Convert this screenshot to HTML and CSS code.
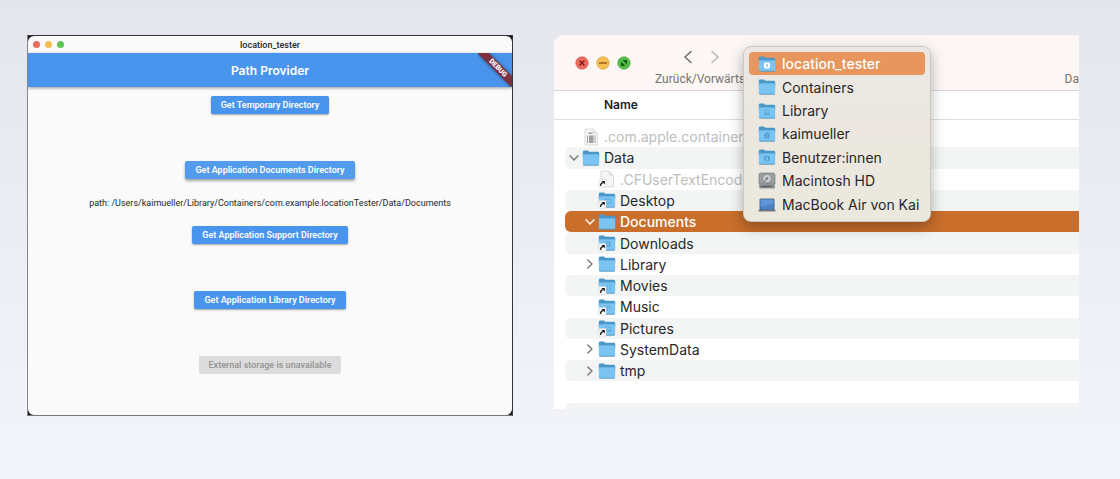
FILE: index.html
```html
<!DOCTYPE html>
<html lang="de">
<head>
<meta charset="utf-8">
<title>Path Provider</title>
<link rel="stylesheet" href="styles.css">
</head>
<body>
<svg class="defs" aria-hidden="true">
  <defs>
    <linearGradient id="blue" x1="0" y1="0" x2="0" y2="1"><stop offset="0" stop-color="#7cc3f0"/><stop offset="1" stop-color="#79c5f5"/></linearGradient>
    <linearGradient id="metal" x1="0" y1="0" x2="0" y2="1"><stop offset="0" stop-color="#8b8d8f"/><stop offset="1" stop-color="#bfc2c4"/></linearGradient>
  </defs>
  <symbol id="folder" viewBox="0 0 18 18">
    <path d="M.8 3Q.8 1.600 2.200 1.600H6l1.300 1.200h8.500Q17.200 2.800 17.200 4.200V8H.8Z" fill="#4a98c8"/>
    <path d="M.8 5h16.400v10q0 1.300-1.300 1.300H2.100Q.8 16.300.8 15Z" fill="url(#blue)"/>
    <path d="M.8 5.500h16.400" stroke="#63aede" stroke-width=".8"/>
    <path d="M1.300 16.200h15.400" stroke="#5b93b7" stroke-width=".9"/>
  </symbol>
  <symbol id="alias" viewBox="0 0 18 18">
    <path d="M1 9.500h7V17H1Z" fill="#fff" stroke="#c5cacd" stroke-width=".5"/>
    <path d="M2.700 15.800q-.3-2.200 2-3.200" fill="none" stroke="#111" stroke-width="1.300"/>
    <path d="M3.300 10.900h3.500v3.500Z" fill="#111"/>
  </symbol>
  <symbol id="file" viewBox="0 0 18 18">
    <path d="M3 1h8l4.500 4.500V17H3Z" fill="#f5f5f5" stroke="#cdcdcd" stroke-width=".7"/>
    <path d="M11 1v4.500h4.500Z" fill="#dedede"/>
  </symbol>
  <symbol id="chevron" viewBox="0 0 10 10"><path d="M2.800 1l4.200 4-4.200 4" fill="none" stroke="currentColor" stroke-width="1.400" stroke-linecap="round" stroke-linejoin="round"/></symbol>
</svg>

<main class="page">
  <section class="frame">
    <div class="app">
      <header class="titlebar">
        <span class="dots"><i class="dot red"></i><i class="dot yellow"></i><i class="dot green"></i></span>
        <span>location_tester</span>
      </header>
      <div class="appbar">
        <h1>Path Provider</h1>
        <div class="debug"><span>DEBUG</span></div>
      </div>
      <div class="actions">
        <div class="slot"><button class="btn">Get Temporary Directory</button></div>
        <div class="slot"><button class="btn raised">Get Application Documents Directory</button>
          <p class="path">path: /Users/kaimueller/Library/Containers/com.example.locationTester/Data/Documents</p></div>
        <div class="slot"><button class="btn">Get Application Support Directory</button></div>
        <div class="slot"><button class="btn">Get Application Library Directory</button></div>
        <div class="slot last"><button class="btn" disabled>External storage is unavailable</button></div>
      </div>
    </div>
  </section>

  <section class="finder">
    <header class="toolbar">
      <div class="controls">
        <button class="control" aria-label="Schließen"><svg viewBox="0 0 14 14"><circle cx="7" cy="7" r="6.200" fill="#ed6a5e" stroke="#d65449" stroke-width=".7"/><path d="M4.500 4.500l5 5m0-5l-5 5" stroke="#7d1712" stroke-width="1.200"/></svg></button>
        <button class="control" aria-label="Minimieren"><svg viewBox="0 0 14 14"><circle cx="7" cy="7" r="6.200" fill="#f5bf4f" stroke="#d9a03c" stroke-width=".7"/><path d="M3 7h8" stroke="#985a18" stroke-width="1.300"/></svg></button>
        <button class="control" aria-label="Vollbild"><svg viewBox="0 0 14 14"><circle cx="7" cy="7" r="6.200" fill="#55bd47" stroke="#47a53c" stroke-width=".7"/><path d="M5.500 4h4.500v4.500ZM4 5.500V10h4.500Z" fill="#145a12"/></svg></button>
      </div>
      <div class="history">
        <div class="arrows">
          <button class="arrow" aria-label="Zurück"><svg viewBox="0 0 10 14"><path d="M8 1.500L2 7l6 5.500" fill="none" stroke="currentColor" stroke-width="1.400" stroke-linecap="round"/></svg></button>
          <button class="arrow dim" aria-label="Vorwärts"><svg viewBox="0 0 10 14"><path d="M2 1.500L8 7l-6 5.500" fill="none" stroke="currentColor" stroke-width="1.400" stroke-linecap="round"/></svg></button>
        </div>
        <span>Zurück/Vorwärts</span>
      </div>
      <span class="view">Da</span>
    </header>
    <div class="column-head">Name</div>
    <ul class="files">
      <li class="row faded"><span class="twist"></span><svg class="icon"><use href="#file"/><path d="M6.500 4.500h4V6h-4ZM7 7.500h4.500V15H7ZM5 7.500h1V15H5ZM12.500 7.500h1V15h-1Z" fill="#a0a0a0"/></svg>.com.apple.containerm</li>
      <li class="row"><button class="twist open" aria-label="Data"><svg><use href="#chevron"/></svg></button><svg class="icon"><use href="#folder"/></svg>Data</li>
      <li class="row child faded"><span class="twist"></span><svg class="icon"><use href="#file"/><use href="#alias"/></svg>.CFUserTextEncoding</li>
      <li class="row child"><span class="twist"></span><svg class="icon"><use href="#folder"/><path d="M7 8h6v4H7Z" fill="none" stroke="#5fabd8"/><use href="#alias"/></svg>Desktop</li>
      <li class="row child selected"><button class="twist open" aria-label="Documents"><svg><use href="#chevron"/></svg></button><svg class="icon"><use href="#folder"/></svg>Documents</li>
      <li class="row child"><span class="twist"></span><svg class="icon"><use href="#folder"/><circle cx="10" cy="10" r="3" fill="#5fabd8"/><path d="M10 8v3m-1-1l1 1 1-1" stroke="#8bcaf2" fill="none" stroke-width=".7"/><use href="#alias"/></svg>Downloads</li>
      <li class="row child"><button class="twist" aria-label="Library"><svg><use href="#chevron"/></svg></button><svg class="icon"><use href="#folder"/></svg>Library</li>
      <li class="row child"><span class="twist"></span><svg class="icon"><use href="#folder"/><path d="M9 7.500v6m3-6v6" stroke="#5fabd8"/><use href="#alias"/></svg>Movies</li>
      <li class="row child"><span class="twist"></span><svg class="icon"><use href="#folder"/><path d="M9 12.500V8.500l3-.7v4" fill="none" stroke="#5fabd8"/><use href="#alias"/></svg>Music</li>
      <li class="row child"><span class="twist"></span><svg class="icon"><use href="#folder"/><path d="M7 8h6v4H7Z" fill="none" stroke="#5fabd8" stroke-width=".7"/><path d="M7 12l2-2 2 1 1-1 1.500 2Z" fill="#5fabd8"/><use href="#alias"/></svg>Pictures</li>
      <li class="row child"><button class="twist" aria-label="SystemData"><svg><use href="#chevron"/></svg></button><svg class="icon"><use href="#folder"/></svg>SystemData</li>
      <li class="row child"><button class="twist" aria-label="tmp"><svg><use href="#chevron"/></svg></button><svg class="icon"><use href="#folder"/></svg>tmp</li>
      <li class="row"></li>
      <li class="row"></li>
    </ul>
    <div class="menu" role="menu">
      <button class="item active" role="menuitem"><svg class="icon"><use href="#folder"/><rect x="6" y="7.500" width="6" height="6" rx="1.500" fill="#fff"/><path d="M9 9v3" stroke="#5aa9dc"/></svg>location_tester</button>
      <button class="item" role="menuitem"><svg class="icon"><use href="#folder"/></svg>Containers</button>
      <button class="item" role="menuitem"><svg class="icon"><use href="#folder"/><path d="M6 9.500l3-2 3 2M6 12.500h6M7 10v2m2-2v2m2-2v2" fill="none" stroke="#519fcb" stroke-width=".8"/></svg>Library</button>
      <button class="item" role="menuitem"><svg class="icon"><use href="#folder"/><path d="M6 10l3-2.500 3 2.500H11v3H7v-3Z" fill="#64abd5" stroke="#4897c6" stroke-width=".7"/></svg>kaimueller</button>
      <button class="item" role="menuitem"><svg class="icon"><use href="#folder"/><circle cx="9" cy="10.500" r="3" fill="#519fcb"/><path d="M9 8.700v4" stroke="#8bcaf2" stroke-width="1.500"/></svg>Benutzer:innen</button>
      <button class="item" role="menuitem"><svg class="icon" viewBox="0 0 18 18"><path d="M3 1h12l2 11v4q0 1-1 1H2q-1 0-1-1V3Q1 1 3 1Z" fill="url(#metal)"/><path d="M3 1h12q2 0 2 2v9H1V3q0-2 2-2Z" fill="#9b9ea0" stroke="#6f7376" stroke-width=".6"/><circle cx="9" cy="6.500" r="4.300" fill="#c9cccd" stroke="#777b7e" stroke-width=".6"/><path d="M9 6.500L6 10" stroke="#5f6467"/><circle cx="9" cy="6.500" r="1.200" fill="#777"/><path d="M1.500 12.500h15v3.500h-15Z" fill="#85898c"/><path d="M3 14.500h10" stroke="#555a5d"/></svg>Macintosh HD</button>
      <button class="item" role="menuitem"><svg class="icon"><path d="M2 4h14v11H2Z" fill="#4c84ca" stroke="#3f4c5c" stroke-width=".8"/><path d="M2.500 4.500h13v4l-13 3Z" fill="#5f96da"/><path d="M0 15h18l-1 1.500H1Z" fill="#737980"/></svg>MacBook Air von Kai</button>
    </div>
  </section>
</main>
</body>
</html>
```
FILE: styles.css
```css
* { box-sizing: border-box; }
body {
  margin: 0;
  min-height: 100vh;
  background: linear-gradient(#e4e6eb, #f4f5fa);
  font-family: Inter, "Liberation Sans", sans-serif;
  color: #272727;
}
h1, p, ul { margin: 0; padding: 0; }
ul { list-style: none; }
button { border: 0; padding: 0; background: none; font: inherit; color: inherit; }
svg { display: block; }
.defs { position: absolute; width: 0; height: 0; }

.page {
  display: grid;
  grid-template-columns: 486fr 525fr;
  gap: 41px;
  align-items: start;
  padding: 35px 41px 35px 27px;
}

.frame {
  background: #18191d;
  border: 1px solid #34353a;
  border-left-color: #85868b;
  border-bottom-color: #77787c;
}
.app { background: #fafafa; border-radius: 6px; overflow: hidden; }
.titlebar {
  display: grid;
  grid-template-columns: 1fr auto 1fr;
  align-items: center;
  height: 17px;
  padding: 0 5px;
  font-family: Roboto, sans-serif;
  font-size: 9px;
  font-weight: 500;
}
.dots { display: flex; gap: 5px; }
.dot { width: 7px; height: 7px; border-radius: 50%; }
.red { background: #ec6a5e; }
.yellow { background: #f4be4f; }
.green { background: #5fc454; }
.appbar {
  position: relative;
  display: flex;
  align-items: center;
  justify-content: center;
  height: 34px;
  background: #4994ec;
  color: #fff;
  box-shadow: 0 1px 3px rgba(0, 0, 0, .4);
}
.appbar h1 { font-size: 12px; font-weight: 600; }
.debug {
  position: absolute;
  top: 0;
  right: 0;
  width: 34px;
  height: 34px;
  overflow: hidden;
}
.debug span {
  position: absolute;
  top: 11px;
  left: -11px;
  width: 62px;
  background: #7c303f;
  box-shadow: 0 0 4px rgba(0, 0, 0, .5);
  font-family: Roboto, sans-serif;
  font-size: 7px;
  font-weight: 900;
  line-height: 8px;
  text-align: center;
  transform: rotate(45deg);
}
.actions { padding-top: 9px; }
.slot { display: flex; flex-direction: column; align-items: center; height: 65px; }
.slot.last { height: 59px; }
.btn {
  flex: none;
  height: 18px;
  padding: 0 10px;
  border-radius: 2px;
  background: #4994ec;
  box-shadow: 0 1px 2px rgba(0, 0, 0, .35);
  color: #fff;
  font-family: Roboto, sans-serif;
  font-size: 9px;
  font-weight: 600;
}
.btn.raised { background: #529bed; box-shadow: 0 2px 3px rgba(0, 0, 0, .35); }
.btn:disabled { background: #dcdcdc; color: #979797; box-shadow: none; }
.path { margin: auto; font-family: Roboto, sans-serif; font-size: 9px; white-space: nowrap; }

.finder {
  position: relative;
  height: 374px;
  overflow: hidden;
  background: #fff;
  border-top-left-radius: 10px;
}
.toolbar {
  display: flex;
  height: 56px;
  padding-left: 21px;
  background: #fcf7f4;
  border-bottom: 1px solid #d9d6d5;
  color: #777473;
  font-family: Roboto, sans-serif;
  font-size: 12px;
}
.controls { display: flex; gap: 7px; padding-top: 21px; }
.control, .control svg { width: 14px; height: 14px; }
.history { padding: 15px 0 0 24px; }
.arrows { display: flex; gap: 17px; padding: 0 0 8px 28px; }
.arrow, .arrow svg { width: 10px; height: 14px; }
.arrow { color: #6b6867; }
.arrow.dim { color: #b9b5b3; }
.history span, .view { display: block; line-height: 15px; }
.view { margin: 37px 0 0 auto; }
.column-head {
  height: 29px;
  padding-left: 50px;
  border-bottom: 1px solid #dedede;
  font-size: 12px;
  font-weight: 600;
  line-height: 28px;
  color: #1d1d1d;
}
.files {
  display: grid;
  grid-auto-rows: 1fr;
  height: 298px;
  margin: 6px 0 0 11px;
}
.row {
  display: flex;
  align-items: center;
  gap: 4px;
  padding-left: 4px;
  border-radius: 6px 0 0 6px;
  font-size: 14px;
  white-space: nowrap;
}
.row:nth-child(even) { background: #f3f5f4; }
.row.child { padding-left: 20px; }
.row.faded { color: #bdbdbd; }
.row.selected { background: #c96e2b; color: #fff; font-weight: 500; }
.twist { width: 10px; height: 10px; color: #777; }
.twist svg { width: 10px; height: 10px; }
.twist.open svg { transform: rotate(90deg); }
.selected .twist { color: #fff; }
.row .icon { margin-left: -1px; }
.icon { width: 18px; height: 18px; flex: none; }

.menu {
  position: absolute;
  top: 11px;
  left: 189px;
  display: grid;
  grid-auto-rows: 1fr;
  width: 188px;
  height: 176px;
  padding: 5px;
  background: linear-gradient(#ece7e3, #ebe8dd);
  border: 1px solid #cbc7c3;
  border-radius: 8px;
  box-shadow: 0 5px 14px rgba(0, 0, 0, .3);
}
.item {
  display: flex;
  align-items: center;
  gap: 6px;
  padding-left: 9px;
  border-radius: 4px;
  font-size: 14px;
  white-space: nowrap;
}
.item.active { background: #e8955e; color: #fff; font-weight: 500; }
```
